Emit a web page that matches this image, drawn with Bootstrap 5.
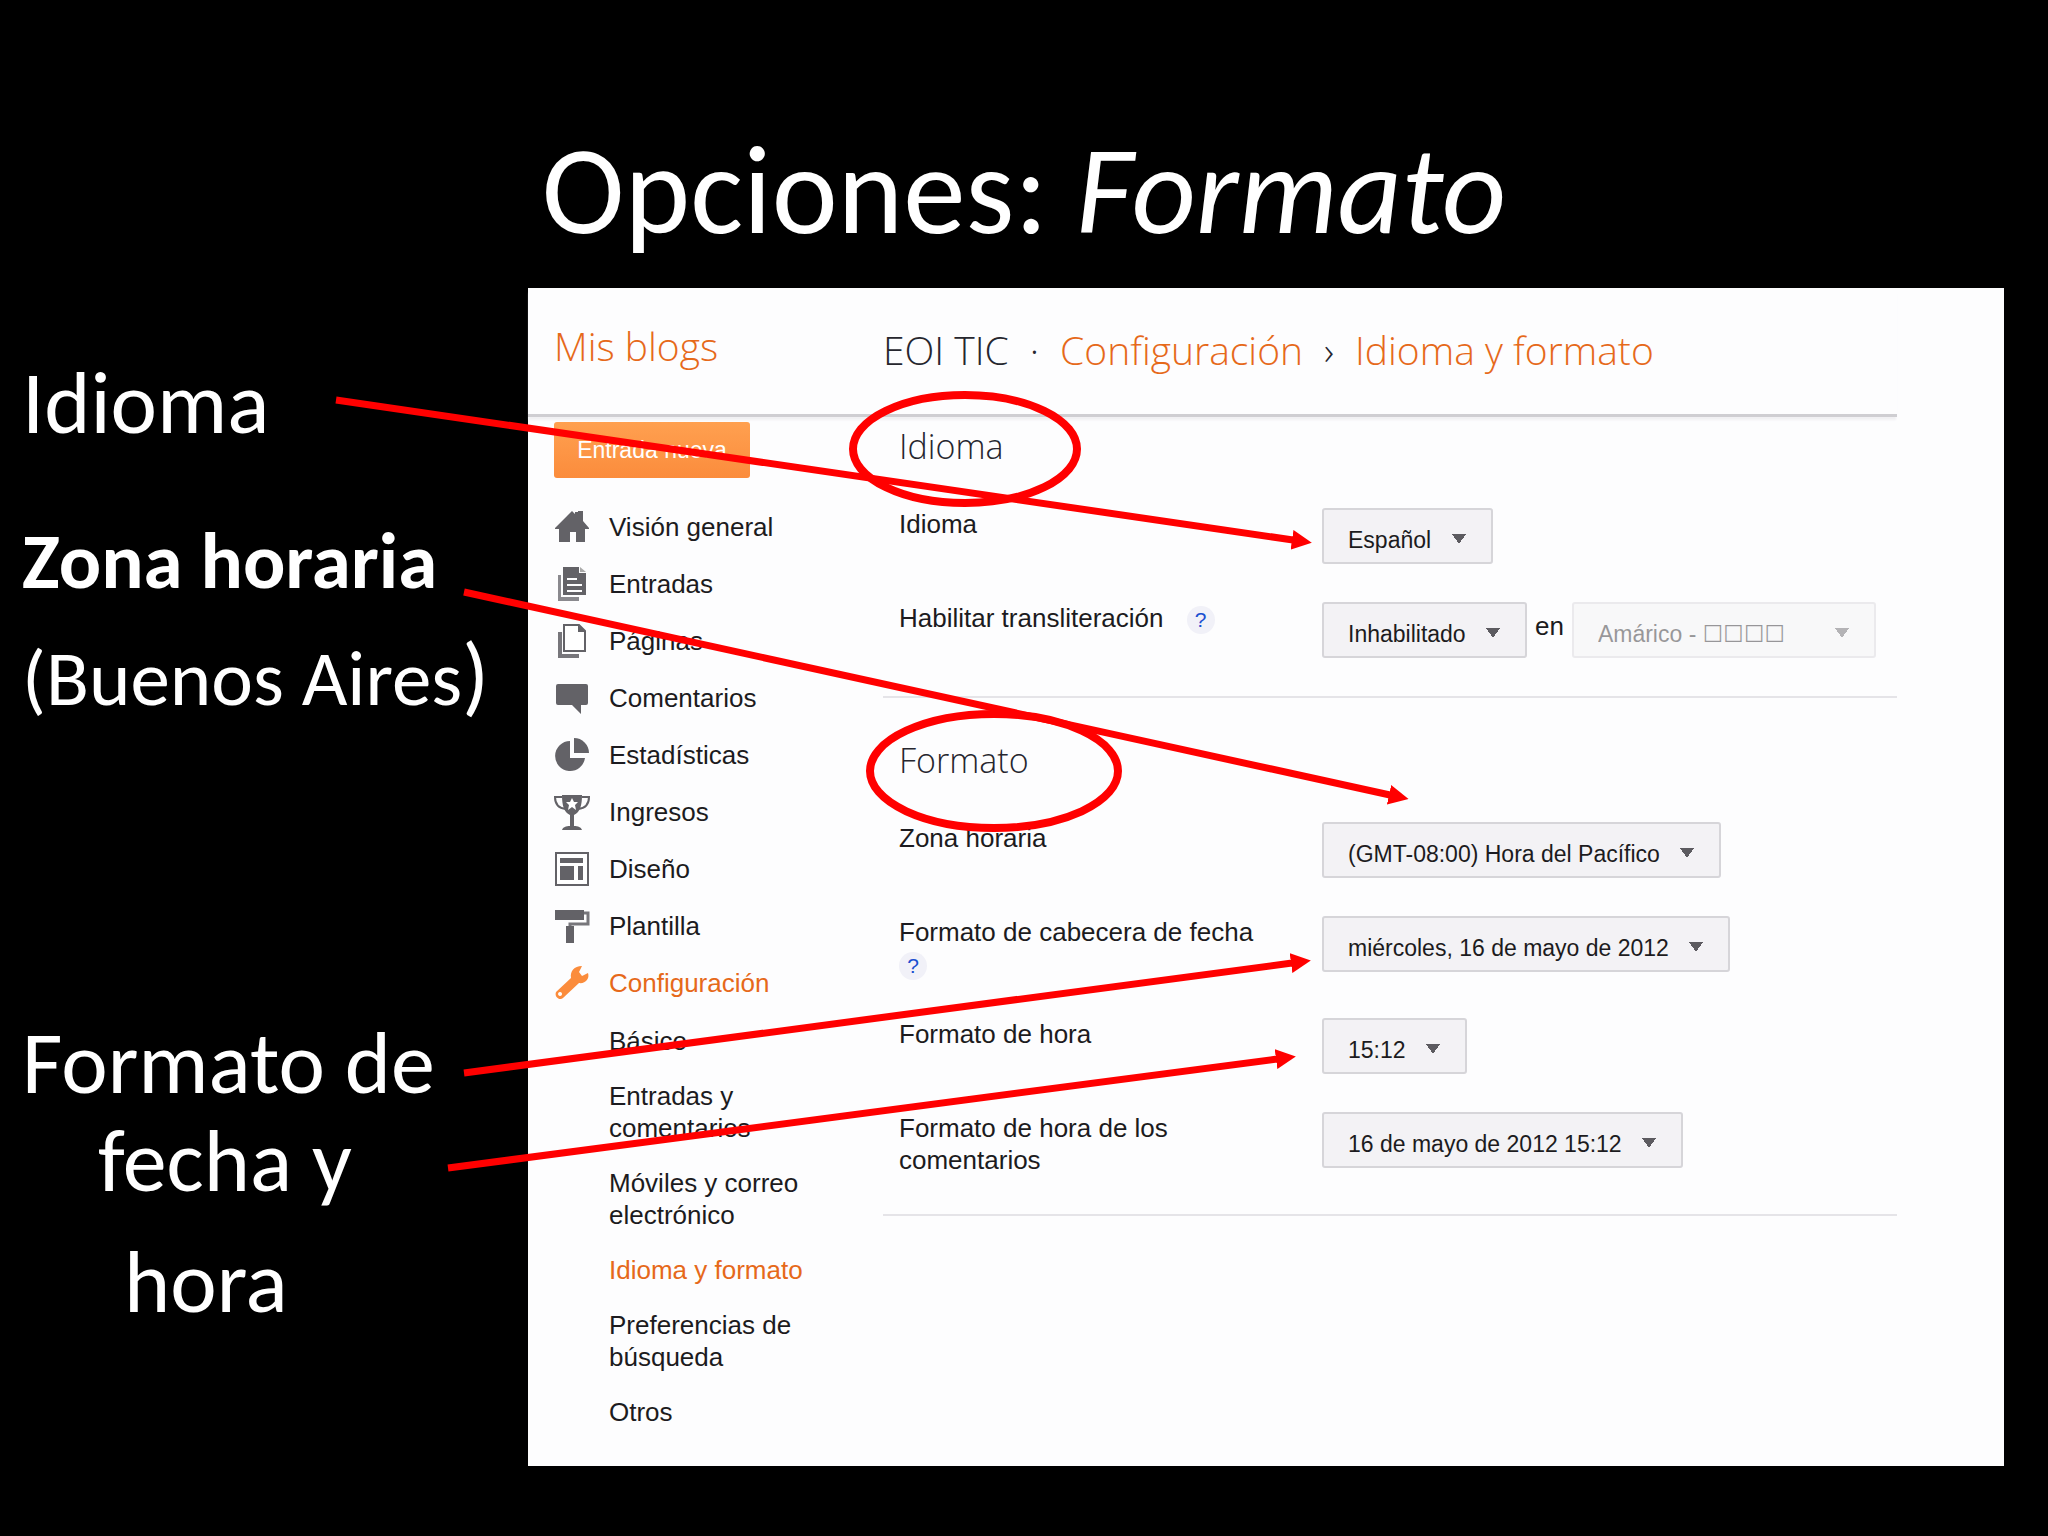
<!DOCTYPE html>
<html lang="es">
<head>
<meta charset="utf-8">
<meta name="viewport" content="width=device-width, initial-scale=1">
<title>Opciones: Formato</title>
<link href="https://cdn.jsdelivr.net/npm/bootstrap@5.3.0/dist/css/bootstrap.min.css" rel="stylesheet">
<style>
  body { background: #000; color: #fff; font-family: Carlito, Lato, sans-serif; }
  .slide { min-height: 100vh; }
  .slide-title { font-size: 125px; line-height: 134px; padding: 124px 0 30px; font-weight: 400; }
  .notes { flex: 0 0 528px; padding: 66px 0 0 22px; font-size: 88px; line-height: 98px; }
  .notes p { margin: 0; white-space: nowrap; }
  .notes .note-mid { font-size: 79px; line-height: 84px; }
  .notes .paren { font-size: 88px; }
  .notes .zone { margin-top: 67px; }
  .notes .city { margin-top: 30px; }
  .notes .date { margin-top: 294px; }
  .notes .date-2 { padding-left: 76px; }
  .notes .hour { padding-left: 102px; margin-top: 23px; }

  .panel { background: #fdfdfe; color: #1c1b20; margin-right: 44px; padding-bottom: 38px; font-family: "Liberation Sans", Arial, sans-serif; font-size: 26px; line-height: 32px; }
  .panel a { text-decoration: none; color: inherit; }
  .panel-head { height: 129px; margin-right: 107px; border-bottom: 3px solid #cfced2; box-shadow: 0 4px 2px -1px #f1f0f3; font-family: "Open Sans", sans-serif; font-weight: 300; font-size: 39px; line-height: 50px; color: #26262e; }
  .side { flex: 0 0 355px; padding-left: 26px; }
  .brand-col { flex: 0 0 355px; padding: 33px 0 0 26px; }
  .crumbs { padding-top: 37px; white-space: nowrap; }
  .crumbs .sep { padding: 0 21px; }
  .panel .accent { color: #e6691a; }
  .btn-new { background: linear-gradient(#ffa050, #fb8c3c); color: #fff; border: 0; border-radius: 3px; font-size: 23px; width: 196px; height: 56px; margin-top: 5px; }
  .menu { margin: 20px 0 0; }
  .menu li { height: 57px; display: flex; align-items: center; gap: 19px; }
  .menu li svg { width: 36px; height: 36px; fill: #636267; flex: none; }
  .submenu { margin: 14px 0 0 55px; width: 200px; }
  .submenu li { margin-bottom: 23px; }
  .submenu li:last-child { margin-bottom: 0; }

  .main { margin-right: 107px; }
  .group { border-bottom: 2px solid #e5e4e8; padding-left: 16px; }
  .group h2 { font-family: "Open Sans", sans-serif; font-weight: 300; font-size: 34px; line-height: 48px; margin: 0; color: #26262e; }
  .g-lang h2 { padding: 5px 0 38px; }
  .g-format h2 { padding: 38px 0 38px; }
  .field { margin-bottom: 38px; }
  .field-label { flex: 0 0 423px; padding-right: 45px; }
  .field select { appearance: none; height: 56px; border: 2px solid #d6d5d9; border-radius: 3px; color: #1c1b20; font-family: "Liberation Sans", "DejaVu Sans", sans-serif; font-size: 23px; padding: 8px 59px 0 24px;
    background-color: #f3f2f5;
    background-image: linear-gradient(to top right, transparent 50%, #5c5b60 50%), linear-gradient(to top left, transparent 50%, #5c5b60 50%);
    background-repeat: no-repeat; background-size: 7px 10px; background-position: right 32px top 24px, right 25px top 24px; }
  .field select:disabled { opacity: .45; min-width: 304px; }
  .help { display: inline-block; width: 28px; height: 28px; border-radius: 50%; background: #f1f1f8; text-align: center; font-size: 21px; line-height: 28px; }
  .panel .help { color: #1a4fd0; }
  .marks { position: absolute; inset: 0; width: 100%; height: 100%; pointer-events: none; }
</style>
</head>
<body>
<div class="slide position-relative">
  <h1 class="slide-title text-center m-0">Opciones: <em>Formato</em></h1>
  <div class="d-flex align-items-start">
    <section class="notes">
      <p>Idioma</p>
      <p class="note-mid zone fw-bold">Zona horaria</p>
      <p class="note-mid city">(Buenos Aires<span class="paren">)</span></p>
      <p class="date">Formato de</p>
      <p class="date-2">fecha y</p>
      <p class="hour">hora</p>
    </section>

    <div class="panel flex-grow-1">
      <header class="panel-head d-flex">
        <div class="brand-col"><a class="accent" href="#">Mis blogs</a></div>
        <nav class="crumbs d-flex" aria-label="Ruta">
          <span>EOI TIC</span><span class="sep">·</span>
          <a class="accent" href="#">Configuración</a><span class="sep">›</span>
          <a class="accent" href="#">Idioma y formato</a>
        </nav>
      </header>

      <div class="d-flex">
        <nav class="side" aria-label="Menú">
          <button class="btn-new" type="button">Entrada nueva</button>
          <ul class="menu list-unstyled">
            <li><svg viewBox="0 0 36 36"><path d="M1 19 14 6l4-4 3 3V3h3v-1h5v10l6 7v1h-4v13h-9V23h-6v10H5V20H1z"/></svg><a href="#">Visión general</a></li>
            <li><svg viewBox="0 0 36 36"><path d="M4 9h3v22h18v4H4z" fill="#8a898e"/><path fill-rule="evenodd" d="M9 1h16v6h7v22H9zM13 12v2h10v-2zM13 18v2h15v-2zM13 24v2h15v-2z"/><path d="M26 1l6 5h-6z" fill="#aaa"/></svg><a href="#">Entradas</a></li>
            <li><svg viewBox="0 0 36 36"><path d="M4 9h4v22h17v4H4z" fill="#77767b"/><path d="M10 2h15l6 6v20H10z" fill="#fff" stroke="#636267" stroke-width="2"/><path d="M24 2l8 7h-8z"/></svg><a href="#">Páginas</a></li>
            <li><svg viewBox="0 0 36 36"><path d="M4 4h28q2 0 2 2v17q0 2-2 2h-5v9l-9-9H4q-2 0-2-2V6q0-2 2-2z"/></svg><a href="#">Comentarios</a></li>
            <li><svg viewBox="0 0 36 36"><path d="M16 4v17h15A15 15 0 1 1 16 4z"/><path d="M20 1a15 15 0 0 1 15 15H20z"/></svg><a href="#">Estadísticas</a></li>
            <li><svg viewBox="0 0 36 36"><path d="M8 1h20c0 11-2 17-8 20v11c4 0 7 1 8 4H8c1-3 4-4 8-4V21C10 18 8 12 8 1z"/><path d="M8 3H1q0 11 11 12M28 3h7q0 11-11 12" fill="none" stroke="#636267" stroke-width="2"/><path d="M18 4l2 4h4l-3 3 1 5-4-3-4 3 1-5-3-3h4z" fill="#fff"/></svg><a href="#">Ingresos</a></li>
            <li><svg viewBox="0 0 36 36"><path d="M2 2h32v32H2z" fill="#fff" stroke="#636267" stroke-width="2"/><path d="M6 7h23v5H6zM6 15h14v14H6zM24 15h5v14h-5z"/></svg><a href="#">Diseño</a></li>
            <li><svg viewBox="0 0 36 36"><path d="M1 2h29v10H1z"/><path d="M30 5h4v11H16v3" fill="none" stroke="#77767b" stroke-width="3"/><path d="M12 18h8v17h-8z"/></svg><a href="#">Plantilla</a></li>
            <li><svg viewBox="0 0 36 36"><path fill="#fb8c3c" fill-rule="evenodd" d="M28 1l-3 6 3 4 6-3c2 6-3 11-9 10L9 33c-3 3-9-1-7-6l15-14C16 6 20 1 28 1zM6 27a2 2 0 1 0 .1 0z"/></svg><a class="accent" href="#">Configuración</a></li>
          </ul>
          <ul class="submenu list-unstyled">
            <li><a href="#">Básico</a></li>
            <li><a href="#">Entradas y comentarios</a></li>
            <li><a href="#">Móviles y correo electrónico</a></li>
            <li><a class="accent" href="#">Idioma y formato</a></li>
            <li><a href="#">Preferencias de búsqueda</a></li>
            <li><a href="#">Otros</a></li>
          </ul>
        </nav>

        <form class="main flex-grow-1">
          <section class="group g-lang">
            <h2>Idioma</h2>
            <div class="field d-flex align-items-start">
              <label class="field-label" for="f-lang">Idioma</label>
              <select id="f-lang"><option>Español</option></select>
            </div>
            <div class="field d-flex align-items-start">
              <div class="field-label"><label for="f-trans">Habilitar transliteración</label> <a class="help ms-3" href="#">?</a></div>
              <select id="f-trans"><option>Inhabilitado</option></select>
              <label class="px-2 pt-2" for="f-into">en</label>
              <select id="f-into" disabled><option>Amárico - ☐☐☐☐</option></select>
            </div>
          </section>
          <section class="group g-format">
            <h2>Formato</h2>
            <div class="field d-flex align-items-start">
              <label class="field-label" for="f-zone">Zona horaria</label>
              <select id="f-zone"><option>(GMT-08:00) Hora del Pacífico</option></select>
            </div>
            <div class="field d-flex align-items-start">
              <div class="field-label"><label for="f-date">Formato de cabecera de fecha</label> <a class="help" href="#">?</a></div>
              <select id="f-date"><option>miércoles, 16 de mayo de 2012</option></select>
            </div>
            <div class="field d-flex align-items-start">
              <label class="field-label" for="f-hour">Formato de hora</label>
              <select id="f-hour"><option>15:12</option></select>
            </div>
            <div class="field d-flex align-items-start">
              <label class="field-label" for="f-comm">Formato de hora de los comentarios</label>
              <select id="f-comm"><option>16 de mayo de 2012 15:12</option></select>
            </div>
          </section>
        </form>
      </div>
    </div>
  </div>

  <svg class="marks" viewBox="0 0 2048 1536" preserveAspectRatio="xMidYMin meet" fill="none" stroke="#f00" stroke-width="7" aria-hidden="true">
    <defs><marker id="tip" markerUnits="userSpaceOnUse" markerWidth="20" markerHeight="20" refX="1" refY="10" orient="auto"><path d="M0 0l20 10-20 10z" fill="#f00" stroke="none"/></marker></defs>
    <ellipse cx="965" cy="449" rx="112" ry="54" stroke-width="8"/>
    <ellipse cx="994" cy="771" rx="124" ry="57" stroke-width="8"/>
    <path d="M336 400L1293 540" marker-end="url(#tip)"/>
    <path d="M464 592L1390 795" marker-end="url(#tip)"/>
    <path d="M464 1073L1292 963" marker-end="url(#tip)"/>
    <path d="M448 1168L1277 1059" marker-end="url(#tip)"/>
  </svg>
</div>
<script src="https://cdn.jsdelivr.net/npm/bootstrap@5.3.0/dist/js/bootstrap.bundle.min.js"></script>
</body>
</html>
